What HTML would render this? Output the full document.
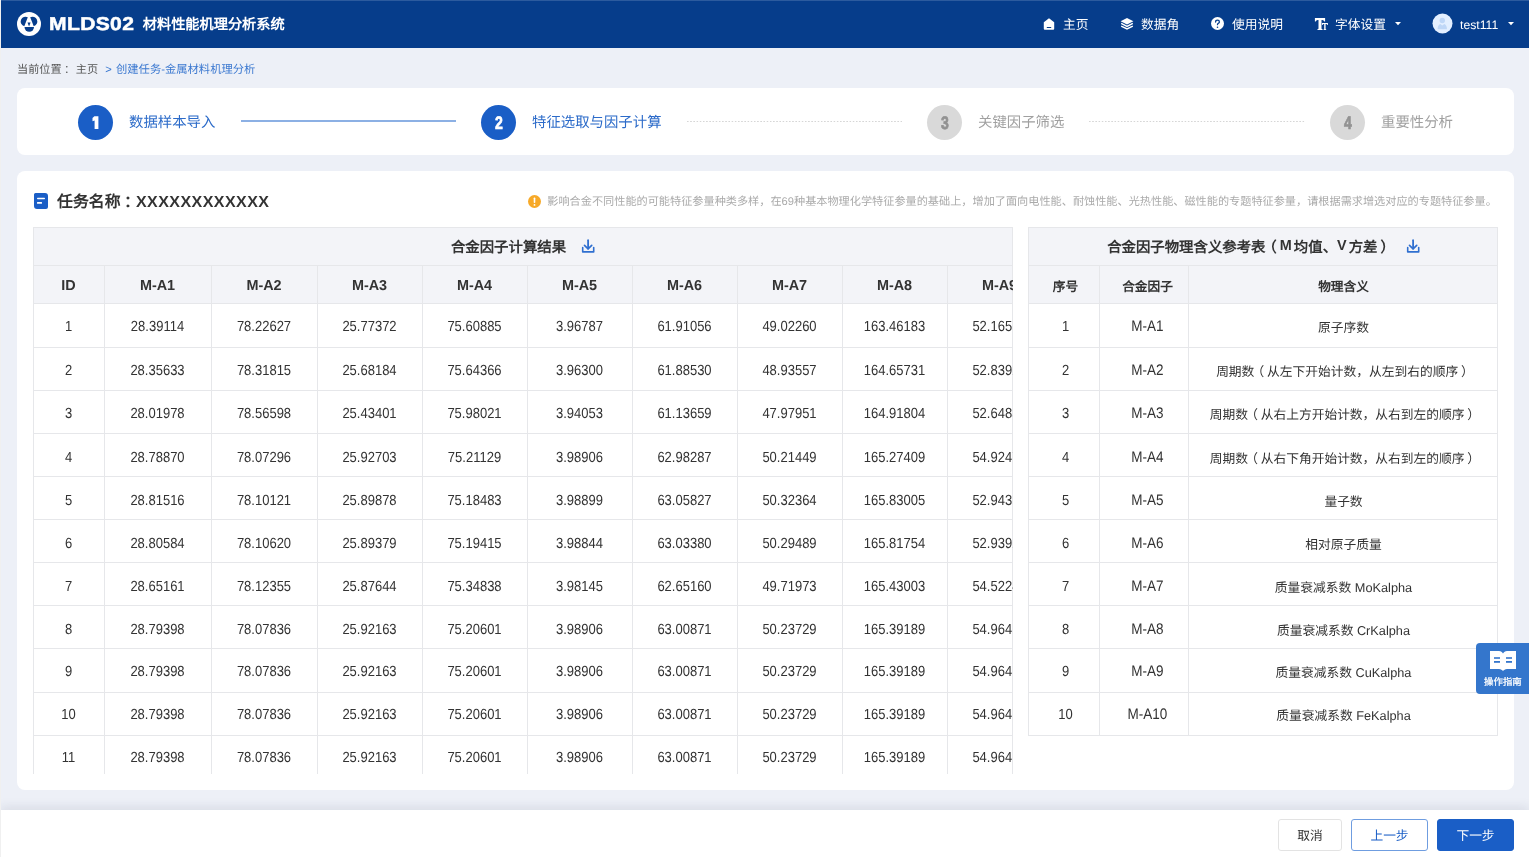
<!DOCTYPE html>
<html lang="zh-CN">
<head>
<meta charset="utf-8">
<title>MLDS02 材料性能机理分析系统</title>
<style>
*{box-sizing:border-box;margin:0;padding:0}
html,body{width:1529px;height:857px;overflow:hidden}
body{position:relative;background:#edf0f7;font-family:"Liberation Sans",sans-serif;color:#333;text-rendering:geometricPrecision}
.abs{position:absolute}
.root{position:absolute;left:0;top:0;width:1529px;height:857px;overflow:hidden;will-change:transform}
.edge{position:absolute;left:0;top:0;width:1px;height:857px;background:#f0f0f0;z-index:50}
.hdr{position:absolute;left:0;top:0;width:1529px;height:48px;background:#063d8b;box-shadow:inset 0 1px 0 #2c5b9e}
.hdr .t{position:absolute;color:#fff;white-space:nowrap}
.nav{position:absolute;top:0;height:48px;line-height:48px;font-size:12.74px;color:#fff;white-space:nowrap}
.crumb{position:absolute;left:17px;top:62px;font-size:11.15px;line-height:16px;color:#555;white-space:nowrap}
.crumb a{color:#3b78d0;text-decoration:none}
.card{position:absolute;background:#fff;border-radius:8px}
.circ{position:absolute;width:35px;height:35px;border-radius:50%;top:104.8px;text-align:center;line-height:36px;font-weight:bold;font-size:18px}
.circ span{display:inline-block;transform:scaleX(0.78);-webkit-text-stroke:0.7px currentColor;position:relative;left:0.8px}
.circ.on{background:#1a5ec6;color:#fff}
.circ.off{background:#d9d9d9;color:#929292}
.slab{position:absolute;top:111px;line-height:24px;font-size:14.4px;white-space:nowrap}
.slab.on{color:#2c6bc9}
.slab.off{color:#a0a0a0}
.sline{position:absolute;top:120px;height:2px}
.tbl{position:absolute;overflow:hidden}
.tbl .hb{position:absolute;background:#f3f4f8}
.tbl .hl{position:absolute;left:0;right:0;height:1px;background:#e6e7ea}
.tbl .vl{position:absolute;width:1px;background:#e6e7ea}
.tbl .ttl{position:absolute;display:flex;align-items:center;justify-content:center;font-weight:bold;font-size:14.4px;color:#333;white-space:nowrap}
.tbl .th{position:absolute;display:flex;align-items:center;justify-content:center;padding-top:3.5px;font-weight:bold;font-size:14.4px;color:#333;white-space:nowrap}
.tbl .td{position:absolute;display:flex;align-items:center;justify-content:center;padding-top:2.2px;font-size:13px;color:#333;white-space:nowrap}
.lp{position:relative;left:-0.22em}.rp{position:relative;left:0.22em}
.th.cj{font-size:12.7px}
.td.cj{font-size:12.74px}
.td.ma{font-size:13.5px}
.tbl .n{display:inline-block;transform:scaleY(1.13) translateY(-0.55px)}
.dl{display:inline-block;width:13px;height:13px;position:relative}
.btn{position:absolute;top:819px;height:32px;border-radius:3px;font-size:12.74px;line-height:32px;text-align:center;white-space:nowrap}
</style>
</head>
<body>
<div class="root">
<div class="edge"></div>

<!-- header -->
<div class="hdr">
  <svg class="abs" style="left:17px;top:11px" width="24" height="26" viewBox="0 0 24 26">
    <circle cx="12" cy="12.9" r="12" fill="#fff"/>
    <path d="M10.8 6.2 L7.3 15.3 A4.9 4.9 0 1 1 10.8 6.2 Z" fill="#063d8b"/>
    <path d="M13.2 6.2 L16.7 15.3 A4.9 4.9 0 1 0 13.2 6.2 Z" fill="#063d8b"/>
    <path d="M7.5 16.1 H17 A4.75 4.75 0 0 1 7.5 16.1 Z" fill="#063d8b"/>
    <path d="M10.5 11.5 H13.6 L12.05 15.5 Z" fill="#063d8b"/>
  </svg>
  <div class="t" style="left:49.4px;top:9.6px;font-size:18.5px;line-height:28px;font-weight:bold;letter-spacing:0.3px;-webkit-text-stroke:0.5px #fff;transform:scaleX(1.14);transform-origin:0 0">MLDS02</div>
  <div class="t" style="left:142.8px;top:10.6px;font-size:14.2px;line-height:28px;font-weight:bold">材料性能机理分析系统</div>

  <!-- nav -->
  <svg class="abs" style="left:1043px;top:18px" width="12" height="12" viewBox="0 0 12 12">
    <path d="M6 0.3 L11.2 4.3 V10.8 a1 1 0 0 1 -1 1 H1.8 a1 1 0 0 1 -1 -1 V4.3 Z" fill="#fff"/>
    <rect x="3.7" y="8.9" width="4.6" height="1.1" rx="0.5" fill="#063d8b"/>
  </svg>
  <div class="nav" style="left:1063px;top:1.2px">主页</div>
  <svg class="abs" style="left:1120px;top:18px" width="14" height="12" viewBox="0 0 14 12">
    <path d="M7 0 L13.4 3.2 L7 6.4 L0.6 3.2 Z" fill="#fff"/>
    <path d="M1.2 5.4 L7 8.3 L12.8 5.4" fill="none" stroke="#fff" stroke-width="1.5"/>
    <path d="M1.2 8.1 L7 11 L12.8 8.1" fill="none" stroke="#fff" stroke-width="1.5"/>
  </svg>
  <div class="nav" style="left:1141px;top:1.2px">数据角</div>
  <svg class="abs" style="left:1211px;top:17.3px" width="13" height="13" viewBox="0 0 13 13">
    <circle cx="6.5" cy="6.5" r="6.5" fill="#fff"/>
    <path d="M4.6 5.0 C4.6 3.9 5.4 3.2 6.5 3.2 C7.6 3.2 8.4 3.9 8.4 4.9 C8.4 6.0 7.0 6.2 6.6 7.1 L6.5 7.6" fill="none" stroke="#063d8b" stroke-width="1.25" stroke-linecap="round"/>
    <circle cx="6.5" cy="10.2" r="0.8" fill="#063d8b"/>
  </svg>
  <div class="nav" style="left:1232px;top:1.2px">使用说明</div>
  <svg class="abs" style="left:1310px;top:12px" width="24" height="24" viewBox="0 0 24 24">
    <path d="M4.9 6 H15.1 V9.4 H14.3 Q14 7.9 12.4 7.9 H11.5 V16.4 Q11.5 17 12.5 17.1 V17.9 H7.5 V17.1 Q8.5 17 8.5 16.4 V7.9 H7.6 Q6 7.9 5.7 9.4 H4.9 Z" fill="#fff"/>
    <path d="M12 10.9 H17.9 V12.9 H17.3 Q17.1 12.1 16.2 12.1 H15.6 V17 Q15.6 17.3 16.2 17.3 V17.9 H13.6 V17.3 Q14.2 17.3 14.2 17 V12.1 H13.7 Q12.8 12.1 12.6 12.9 H12 Z" fill="#fff"/>
  </svg>
  <div class="nav" style="left:1335px;top:1.2px">字体设置</div>
  <svg class="abs" style="left:1395px;top:22px" width="6" height="4" viewBox="0 0 6 4"><path d="M0 0 H6 L3 3.2 Z" fill="#fff"/></svg>
  <svg class="abs" style="left:1432px;top:13px" width="21" height="21" viewBox="0 0 21 21">
    <circle cx="10.5" cy="10.5" r="10" fill="#e3efff"/>
    <circle cx="10.3" cy="7.5" r="2.7" fill="#bfd7f7"/>
    <path d="M5.6 16.2 C5.6 12.8 7.2 11.2 8.3 11 L10.3 12.6 L12.3 11 C13.4 11.2 15 12.8 15 16.2 Z" fill="#bfd7f7"/>
  </svg>
  <div class="nav" style="left:1460px;top:0.5px;font-size:12.2px">test111</div>
  <svg class="abs" style="left:1508px;top:22px" width="6" height="4" viewBox="0 0 6 4"><path d="M0 0 H6 L3 3.2 Z" fill="#fff"/></svg>
</div>

<!-- breadcrumb -->
<div class="crumb" style="left:17px">当前位置<span style="position:relative;left:2.5px">：</span></div><div class="crumb" style="left:75.8px">主页</div><div class="crumb" style="left:105.3px;color:#3b78d0">&gt;</div><div class="crumb" style="left:116px;color:#3b78d0;font-size:11.3px">创建任务-金属材料机理分析</div>

<!-- steps card -->
<div class="card" style="left:17px;top:88px;width:1497px;height:67px"></div>
<div class="circ on" style="left:78.3px"><svg style="position:absolute;left:0;top:0" width="35" height="35" viewBox="0 0 35 35"><path d="M16.4 11.2 H20.4 V24.1 H16.6 V15.4 L14.5 16.3 V13.0 Z" fill="#fff"/></svg></div>
<div class="slab on" style="left:129px">数据样本导入</div>
<div class="sline" style="left:241px;width:215px;background:#8cb0e4;height:1.6px"></div>
<div class="circ on" style="left:481px"><span>2</span></div>
<div class="slab on" style="left:532px">特征选取与因子计算</div>
<div class="sline" style="left:687px;top:121px;width:215px;height:1px;background-image:linear-gradient(to right,#d6d6d6 1.2px,transparent 1.2px);background-size:3.19px 1px"></div>
<div class="circ off" style="left:927px"><span>3</span></div>
<div class="slab off" style="left:978px">关键因子筛选</div>
<div class="sline" style="left:1089px;top:121px;width:216px;height:1px;background-image:linear-gradient(to right,#d6d6d6 1.2px,transparent 1.2px);background-size:3.19px 1px"></div>
<div class="circ off" style="left:1330px"><span>4</span></div>
<div class="slab off" style="left:1381px">重要性分析</div>

<!-- main card -->
<div class="card" style="left:17px;top:171px;width:1497px;height:619px"></div>
<svg class="abs" style="left:34px;top:193px" width="14" height="16" viewBox="0 0 14 16">
  <path d="M1.5 0 H11 A3 3 0 0 1 14 3 V14 A2 2 0 0 1 12 16 H3 A3 3 0 0 1 0 13 V1.5 A1.5 1.5 0 0 1 1.5 0 Z" fill="#1a5ec6"/>
  <rect x="3" y="4.8" width="8" height="1.5" rx="0.7" fill="#fff"/>
  <rect x="3" y="9.1" width="5" height="1.7" rx="0.5" fill="#fff"/>
</svg>
<div class="abs" style="left:57px;top:191.5px;font-size:15.9px;line-height:22px;font-weight:bold;color:#333;white-space:nowrap">任务名称</div>
<div class="abs" style="left:124px;top:191.5px;font-size:15.9px;line-height:22px;font-weight:bold;color:#333;white-space:nowrap">：</div>
<div class="abs" style="left:136px;top:191.5px;font-size:16px;line-height:22px;font-weight:bold;color:#333;white-space:nowrap;letter-spacing:0.45px">XXXXXXXXXXXX</div>
<svg class="abs" style="left:528px;top:195px" width="13" height="13" viewBox="0 0 13 13">
  <circle cx="6.5" cy="6.5" r="6.5" fill="#f7a928"/>
  <rect x="5.7" y="2.6" width="1.6" height="5.4" rx="0.7" fill="#fff"/>
  <circle cx="6.5" cy="9.9" r="0.9" fill="#fff"/>
</svg>
<div class="abs" style="left:547.3px;top:194px;font-size:11.16px;line-height:16px;color:#aaa;white-space:nowrap">影响合金不同性能的可能特征参量种类多样，在69种基本物理化学特征参量的基础上，增加了面向电性能、耐蚀性能、光热性能、磁性能的专题特征参量，请根据需求增选对应的专题特征参量。</div>

<div class="tbl" style="left:33px;top:227px;width:980px;height:547px">
<div class="hb" style="left:0;top:0;width:100%;height:76px"></div>
<div class="hl" style="top:0px"></div>
<div class="hl" style="top:38px"></div>
<div class="hl" style="top:76px"></div>
<div class="hl" style="top:120px"></div>
<div class="hl" style="top:163px"></div>
<div class="hl" style="top:206px"></div>
<div class="hl" style="top:249px"></div>
<div class="hl" style="top:292px"></div>
<div class="hl" style="top:335px"></div>
<div class="hl" style="top:378px"></div>
<div class="hl" style="top:421px"></div>
<div class="hl" style="top:465px"></div>
<div class="hl" style="top:508px"></div>
<div class="vl" style="left:0;top:0;bottom:0"></div>
<div class="vl" style="left:979px;top:0;bottom:0"></div>
<div class="vl" style="left:71px;top:38px;bottom:0"></div>
<div class="vl" style="left:178px;top:38px;bottom:0"></div>
<div class="vl" style="left:284px;top:38px;bottom:0"></div>
<div class="vl" style="left:389px;top:38px;bottom:0"></div>
<div class="vl" style="left:494px;top:38px;bottom:0"></div>
<div class="vl" style="left:599px;top:38px;bottom:0"></div>
<div class="vl" style="left:704px;top:38px;bottom:0"></div>
<div class="vl" style="left:809px;top:38px;bottom:0"></div>
<div class="vl" style="left:914px;top:38px;bottom:0"></div>
<div class="ttl" style="left:1px;top:0.3px;width:979px;height:38px;padding-right:30px">合金因子计算结果</div>
<svg style="position:absolute;left:548px;top:12px" width="14" height="14" viewBox="0 0 14 14"><path d="M7.1 1.2 V9.6" stroke="#2f6fd0" stroke-width="1.8" stroke-linecap="round" fill="none"/><path d="M3.5 6.4 L7.1 9.9 L10.7 6.4" stroke="#2f6fd0" stroke-width="1.7" stroke-linecap="round" stroke-linejoin="round" fill="none"/><path d="M1.7 8.6 V12.9 H12.7 V8.6" stroke="#2f6fd0" stroke-width="1.6" stroke-linecap="round" stroke-linejoin="round" fill="none"/></svg>
<div class="th" style="left:0px;top:38px;width:71px;height:38px">ID</div>
<div class="th" style="left:71px;top:38px;width:107px;height:38px">M-A1</div>
<div class="th" style="left:178px;top:38px;width:106px;height:38px">M-A2</div>
<div class="th" style="left:284px;top:38px;width:105px;height:38px">M-A3</div>
<div class="th" style="left:389px;top:38px;width:105px;height:38px">M-A4</div>
<div class="th" style="left:494px;top:38px;width:105px;height:38px">M-A5</div>
<div class="th" style="left:599px;top:38px;width:105px;height:38px">M-A6</div>
<div class="th" style="left:704px;top:38px;width:105px;height:38px">M-A7</div>
<div class="th" style="left:809px;top:38px;width:105px;height:38px">M-A8</div>
<div class="th" style="left:914px;top:38px;width:105px;height:38px">M-A9</div>
<div class="td" style="left:0px;top:76.00px;width:71px;height:44px"><span class="n">1</span></div>
<div class="td" style="left:71px;top:76.00px;width:107px;height:44px"><span class="n">28.39114</span></div>
<div class="td" style="left:178px;top:76.00px;width:106px;height:44px"><span class="n">78.22627</span></div>
<div class="td" style="left:284px;top:76.00px;width:105px;height:44px"><span class="n">25.77372</span></div>
<div class="td" style="left:389px;top:76.00px;width:105px;height:44px"><span class="n">75.60885</span></div>
<div class="td" style="left:494px;top:76.00px;width:105px;height:44px"><span class="n">3.96787</span></div>
<div class="td" style="left:599px;top:76.00px;width:105px;height:44px"><span class="n">61.91056</span></div>
<div class="td" style="left:704px;top:76.00px;width:105px;height:44px"><span class="n">49.02260</span></div>
<div class="td" style="left:809px;top:76.00px;width:105px;height:44px"><span class="n">163.46183</span></div>
<div class="td" style="left:914px;top:76.00px;width:105px;height:44px"><span class="n">52.16512</span></div>
<div class="td" style="left:0px;top:120.90px;width:71px;height:43px"><span class="n">2</span></div>
<div class="td" style="left:71px;top:120.90px;width:107px;height:43px"><span class="n">28.35633</span></div>
<div class="td" style="left:178px;top:120.90px;width:106px;height:43px"><span class="n">78.31815</span></div>
<div class="td" style="left:284px;top:120.90px;width:105px;height:43px"><span class="n">25.68184</span></div>
<div class="td" style="left:389px;top:120.90px;width:105px;height:43px"><span class="n">75.64366</span></div>
<div class="td" style="left:494px;top:120.90px;width:105px;height:43px"><span class="n">3.96300</span></div>
<div class="td" style="left:599px;top:120.90px;width:105px;height:43px"><span class="n">61.88530</span></div>
<div class="td" style="left:704px;top:120.90px;width:105px;height:43px"><span class="n">48.93557</span></div>
<div class="td" style="left:809px;top:120.90px;width:105px;height:43px"><span class="n">164.65731</span></div>
<div class="td" style="left:914px;top:120.90px;width:105px;height:43px"><span class="n">52.83921</span></div>
<div class="td" style="left:0px;top:163.90px;width:71px;height:43px"><span class="n">3</span></div>
<div class="td" style="left:71px;top:163.90px;width:107px;height:43px"><span class="n">28.01978</span></div>
<div class="td" style="left:178px;top:163.90px;width:106px;height:43px"><span class="n">78.56598</span></div>
<div class="td" style="left:284px;top:163.90px;width:105px;height:43px"><span class="n">25.43401</span></div>
<div class="td" style="left:389px;top:163.90px;width:105px;height:43px"><span class="n">75.98021</span></div>
<div class="td" style="left:494px;top:163.90px;width:105px;height:43px"><span class="n">3.94053</span></div>
<div class="td" style="left:599px;top:163.90px;width:105px;height:43px"><span class="n">61.13659</span></div>
<div class="td" style="left:704px;top:163.90px;width:105px;height:43px"><span class="n">47.97951</span></div>
<div class="td" style="left:809px;top:163.90px;width:105px;height:43px"><span class="n">164.91804</span></div>
<div class="td" style="left:914px;top:163.90px;width:105px;height:43px"><span class="n">52.64832</span></div>
<div class="td" style="left:0px;top:208.00px;width:71px;height:43px"><span class="n">4</span></div>
<div class="td" style="left:71px;top:208.00px;width:107px;height:43px"><span class="n">28.78870</span></div>
<div class="td" style="left:178px;top:208.00px;width:106px;height:43px"><span class="n">78.07296</span></div>
<div class="td" style="left:284px;top:208.00px;width:105px;height:43px"><span class="n">25.92703</span></div>
<div class="td" style="left:389px;top:208.00px;width:105px;height:43px"><span class="n">75.21129</span></div>
<div class="td" style="left:494px;top:208.00px;width:105px;height:43px"><span class="n">3.98906</span></div>
<div class="td" style="left:599px;top:208.00px;width:105px;height:43px"><span class="n">62.98287</span></div>
<div class="td" style="left:704px;top:208.00px;width:105px;height:43px"><span class="n">50.21449</span></div>
<div class="td" style="left:809px;top:208.00px;width:105px;height:43px"><span class="n">165.27409</span></div>
<div class="td" style="left:914px;top:208.00px;width:105px;height:43px"><span class="n">54.92471</span></div>
<div class="td" style="left:0px;top:251.00px;width:71px;height:43px"><span class="n">5</span></div>
<div class="td" style="left:71px;top:251.00px;width:107px;height:43px"><span class="n">28.81516</span></div>
<div class="td" style="left:178px;top:251.00px;width:106px;height:43px"><span class="n">78.10121</span></div>
<div class="td" style="left:284px;top:251.00px;width:105px;height:43px"><span class="n">25.89878</span></div>
<div class="td" style="left:389px;top:251.00px;width:105px;height:43px"><span class="n">75.18483</span></div>
<div class="td" style="left:494px;top:251.00px;width:105px;height:43px"><span class="n">3.98899</span></div>
<div class="td" style="left:599px;top:251.00px;width:105px;height:43px"><span class="n">63.05827</span></div>
<div class="td" style="left:704px;top:251.00px;width:105px;height:43px"><span class="n">50.32364</span></div>
<div class="td" style="left:809px;top:251.00px;width:105px;height:43px"><span class="n">165.83005</span></div>
<div class="td" style="left:914px;top:251.00px;width:105px;height:43px"><span class="n">52.94318</span></div>
<div class="td" style="left:0px;top:293.85px;width:71px;height:43px"><span class="n">6</span></div>
<div class="td" style="left:71px;top:293.85px;width:107px;height:43px"><span class="n">28.80584</span></div>
<div class="td" style="left:178px;top:293.85px;width:106px;height:43px"><span class="n">78.10620</span></div>
<div class="td" style="left:284px;top:293.85px;width:105px;height:43px"><span class="n">25.89379</span></div>
<div class="td" style="left:389px;top:293.85px;width:105px;height:43px"><span class="n">75.19415</span></div>
<div class="td" style="left:494px;top:293.85px;width:105px;height:43px"><span class="n">3.98844</span></div>
<div class="td" style="left:599px;top:293.85px;width:105px;height:43px"><span class="n">63.03380</span></div>
<div class="td" style="left:704px;top:293.85px;width:105px;height:43px"><span class="n">50.29489</span></div>
<div class="td" style="left:809px;top:293.85px;width:105px;height:43px"><span class="n">165.81754</span></div>
<div class="td" style="left:914px;top:293.85px;width:105px;height:43px"><span class="n">52.93927</span></div>
<div class="td" style="left:0px;top:336.90px;width:71px;height:43px"><span class="n">7</span></div>
<div class="td" style="left:71px;top:336.90px;width:107px;height:43px"><span class="n">28.65161</span></div>
<div class="td" style="left:178px;top:336.90px;width:106px;height:43px"><span class="n">78.12355</span></div>
<div class="td" style="left:284px;top:336.90px;width:105px;height:43px"><span class="n">25.87644</span></div>
<div class="td" style="left:389px;top:336.90px;width:105px;height:43px"><span class="n">75.34838</span></div>
<div class="td" style="left:494px;top:336.90px;width:105px;height:43px"><span class="n">3.98145</span></div>
<div class="td" style="left:599px;top:336.90px;width:105px;height:43px"><span class="n">62.65160</span></div>
<div class="td" style="left:704px;top:336.90px;width:105px;height:43px"><span class="n">49.71973</span></div>
<div class="td" style="left:809px;top:336.90px;width:105px;height:43px"><span class="n">165.43003</span></div>
<div class="td" style="left:914px;top:336.90px;width:105px;height:43px"><span class="n">54.52241</span></div>
<div class="td" style="left:0px;top:379.85px;width:71px;height:43px"><span class="n">8</span></div>
<div class="td" style="left:71px;top:379.85px;width:107px;height:43px"><span class="n">28.79398</span></div>
<div class="td" style="left:178px;top:379.85px;width:106px;height:43px"><span class="n">78.07836</span></div>
<div class="td" style="left:284px;top:379.85px;width:105px;height:43px"><span class="n">25.92163</span></div>
<div class="td" style="left:389px;top:379.85px;width:105px;height:43px"><span class="n">75.20601</span></div>
<div class="td" style="left:494px;top:379.85px;width:105px;height:43px"><span class="n">3.98906</span></div>
<div class="td" style="left:599px;top:379.85px;width:105px;height:43px"><span class="n">63.00871</span></div>
<div class="td" style="left:704px;top:379.85px;width:105px;height:43px"><span class="n">50.23729</span></div>
<div class="td" style="left:809px;top:379.85px;width:105px;height:43px"><span class="n">165.39189</span></div>
<div class="td" style="left:914px;top:379.85px;width:105px;height:43px"><span class="n">54.96410</span></div>
<div class="td" style="left:0px;top:421.20px;width:71px;height:44px"><span class="n">9</span></div>
<div class="td" style="left:71px;top:421.20px;width:107px;height:44px"><span class="n">28.79398</span></div>
<div class="td" style="left:178px;top:421.20px;width:106px;height:44px"><span class="n">78.07836</span></div>
<div class="td" style="left:284px;top:421.20px;width:105px;height:44px"><span class="n">25.92163</span></div>
<div class="td" style="left:389px;top:421.20px;width:105px;height:44px"><span class="n">75.20601</span></div>
<div class="td" style="left:494px;top:421.20px;width:105px;height:44px"><span class="n">3.98906</span></div>
<div class="td" style="left:599px;top:421.20px;width:105px;height:44px"><span class="n">63.00871</span></div>
<div class="td" style="left:704px;top:421.20px;width:105px;height:44px"><span class="n">50.23729</span></div>
<div class="td" style="left:809px;top:421.20px;width:105px;height:44px"><span class="n">165.39189</span></div>
<div class="td" style="left:914px;top:421.20px;width:105px;height:44px"><span class="n">54.96410</span></div>
<div class="td" style="left:0px;top:465.00px;width:71px;height:43px"><span class="n">10</span></div>
<div class="td" style="left:71px;top:465.00px;width:107px;height:43px"><span class="n">28.79398</span></div>
<div class="td" style="left:178px;top:465.00px;width:106px;height:43px"><span class="n">78.07836</span></div>
<div class="td" style="left:284px;top:465.00px;width:105px;height:43px"><span class="n">25.92163</span></div>
<div class="td" style="left:389px;top:465.00px;width:105px;height:43px"><span class="n">75.20601</span></div>
<div class="td" style="left:494px;top:465.00px;width:105px;height:43px"><span class="n">3.98906</span></div>
<div class="td" style="left:599px;top:465.00px;width:105px;height:43px"><span class="n">63.00871</span></div>
<div class="td" style="left:704px;top:465.00px;width:105px;height:43px"><span class="n">50.23729</span></div>
<div class="td" style="left:809px;top:465.00px;width:105px;height:43px"><span class="n">165.39189</span></div>
<div class="td" style="left:914px;top:465.00px;width:105px;height:43px"><span class="n">54.96410</span></div>
<div class="td" style="left:0px;top:508.00px;width:71px;height:43px"><span class="n">11</span></div>
<div class="td" style="left:71px;top:508.00px;width:107px;height:43px"><span class="n">28.79398</span></div>
<div class="td" style="left:178px;top:508.00px;width:106px;height:43px"><span class="n">78.07836</span></div>
<div class="td" style="left:284px;top:508.00px;width:105px;height:43px"><span class="n">25.92163</span></div>
<div class="td" style="left:389px;top:508.00px;width:105px;height:43px"><span class="n">75.20601</span></div>
<div class="td" style="left:494px;top:508.00px;width:105px;height:43px"><span class="n">3.98906</span></div>
<div class="td" style="left:599px;top:508.00px;width:105px;height:43px"><span class="n">63.00871</span></div>
<div class="td" style="left:704px;top:508.00px;width:105px;height:43px"><span class="n">50.23729</span></div>
<div class="td" style="left:809px;top:508.00px;width:105px;height:43px"><span class="n">165.39189</span></div>
<div class="td" style="left:914px;top:508.00px;width:105px;height:43px"><span class="n">54.96410</span></div>
</div>
<div class="tbl" style="left:1028px;top:227px;width:470px;height:509px">
<div class="hb" style="left:0;top:0;width:100%;height:76px"></div>
<div class="hl" style="top:0px"></div>
<div class="hl" style="top:38px"></div>
<div class="hl" style="top:76px"></div>
<div class="hl" style="top:120px"></div>
<div class="hl" style="top:163px"></div>
<div class="hl" style="top:206px"></div>
<div class="hl" style="top:249px"></div>
<div class="hl" style="top:292px"></div>
<div class="hl" style="top:335px"></div>
<div class="hl" style="top:378px"></div>
<div class="hl" style="top:421px"></div>
<div class="hl" style="top:465px"></div>
<div class="hl" style="top:508px"></div>
<div class="vl" style="left:0;top:0;bottom:0"></div>
<div class="vl" style="left:469px;top:0;bottom:0"></div>
<div class="vl" style="left:71px;top:38px;bottom:0"></div>
<div class="vl" style="left:160px;top:38px;bottom:0"></div>
<div class="ttl" style="left:2px;top:0.3px;width:469px;height:38px;padding-right:30px">合金因子物理含义参考表<span class="lp">（</span><span style="margin-right:2px">M</span>均值、<span style="margin-right:2px">V</span>方差<span class="rp">）</span></div>
<svg style="position:absolute;left:378px;top:12px" width="14" height="14" viewBox="0 0 14 14"><path d="M7.1 1.2 V9.6" stroke="#2f6fd0" stroke-width="1.8" stroke-linecap="round" fill="none"/><path d="M3.5 6.4 L7.1 9.9 L10.7 6.4" stroke="#2f6fd0" stroke-width="1.7" stroke-linecap="round" stroke-linejoin="round" fill="none"/><path d="M1.7 8.6 V12.9 H12.7 V8.6" stroke="#2f6fd0" stroke-width="1.6" stroke-linecap="round" stroke-linejoin="round" fill="none"/></svg>
<div class="th cj" style="left:2px;top:38px;width:71px;height:38px">序号</div>
<div class="th cj" style="left:75px;top:38px;width:89px;height:38px">合金因子</div>
<div class="th cj" style="left:161px;top:38px;width:309px;height:38px">物理含义</div>
<div class="td" style="left:2px;top:76.00px;width:71px;height:44px"><span class="n">1</span></div>
<div class="td ma" style="left:75px;top:76.00px;width:89px;height:44px"><span class="n">M-A1</span></div>
<div class="td cj" style="left:161px;top:76.00px;width:309px;height:44px">原子序数</div>
<div class="td" style="left:2px;top:120.90px;width:71px;height:43px"><span class="n">2</span></div>
<div class="td ma" style="left:75px;top:120.90px;width:89px;height:43px"><span class="n">M-A2</span></div>
<div class="td cj" style="left:161px;top:120.90px;width:309px;height:43px">周期数<span class="lp">（</span>从左下开始计数，从左到右的顺序<span class="rp">）</span></div>
<div class="td" style="left:2px;top:163.90px;width:71px;height:43px"><span class="n">3</span></div>
<div class="td ma" style="left:75px;top:163.90px;width:89px;height:43px"><span class="n">M-A3</span></div>
<div class="td cj" style="left:161px;top:163.90px;width:309px;height:43px">周期数<span class="lp">（</span>从右上方开始计数，从右到左的顺序<span class="rp">）</span></div>
<div class="td" style="left:2px;top:208.00px;width:71px;height:43px"><span class="n">4</span></div>
<div class="td ma" style="left:75px;top:208.00px;width:89px;height:43px"><span class="n">M-A4</span></div>
<div class="td cj" style="left:161px;top:208.00px;width:309px;height:43px">周期数<span class="lp">（</span>从右下角开始计数，从右到左的顺序<span class="rp">）</span></div>
<div class="td" style="left:2px;top:251.00px;width:71px;height:43px"><span class="n">5</span></div>
<div class="td ma" style="left:75px;top:251.00px;width:89px;height:43px"><span class="n">M-A5</span></div>
<div class="td cj" style="left:161px;top:251.00px;width:309px;height:43px">量子数</div>
<div class="td" style="left:2px;top:293.85px;width:71px;height:43px"><span class="n">6</span></div>
<div class="td ma" style="left:75px;top:293.85px;width:89px;height:43px"><span class="n">M-A6</span></div>
<div class="td cj" style="left:161px;top:293.85px;width:309px;height:43px">相对原子质量</div>
<div class="td" style="left:2px;top:336.90px;width:71px;height:43px"><span class="n">7</span></div>
<div class="td ma" style="left:75px;top:336.90px;width:89px;height:43px"><span class="n">M-A7</span></div>
<div class="td cj" style="left:161px;top:336.90px;width:309px;height:43px">质量衰减系数 MoKalpha</div>
<div class="td" style="left:2px;top:379.85px;width:71px;height:43px"><span class="n">8</span></div>
<div class="td ma" style="left:75px;top:379.85px;width:89px;height:43px"><span class="n">M-A8</span></div>
<div class="td cj" style="left:161px;top:379.85px;width:309px;height:43px">质量衰减系数 CrKalpha</div>
<div class="td" style="left:2px;top:421.20px;width:71px;height:44px"><span class="n">9</span></div>
<div class="td ma" style="left:75px;top:421.20px;width:89px;height:44px"><span class="n">M-A9</span></div>
<div class="td cj" style="left:161px;top:421.20px;width:309px;height:44px">质量衰减系数 CuKalpha</div>
<div class="td" style="left:2px;top:465.00px;width:71px;height:43px"><span class="n">10</span></div>
<div class="td ma" style="left:75px;top:465.00px;width:89px;height:43px"><span class="n">M-A10</span></div>
<div class="td cj" style="left:161px;top:465.00px;width:309px;height:43px">质量衰减系数 FeKalpha</div>
</div>

<!-- footer -->
<div class="abs" style="left:0;top:810px;width:1529px;height:47px;background:#fff;box-shadow:0 -3px 10px rgba(40,50,80,0.10)"></div>
<div class="btn" style="left:1278px;width:64px;border:1px solid #e3e3e3;background:#fff;color:#333">取消</div>
<div class="btn" style="left:1351px;width:77px;border:1px solid #6f9de0;background:#fff;color:#1a5ec6">上一步</div>
<div class="btn" style="left:1437px;width:77px;border:1px solid #1a5ec6;background:#1a5ec6;color:#fff">下一步</div>

<!-- side tab -->
<div class="abs" style="left:1476px;top:643px;width:53px;height:51px;background:#3476cc;border-radius:4px 0 0 4px"></div>
<svg class="abs" style="left:1490px;top:651px" width="26" height="20" viewBox="0 0 26 20">
  <path d="M0 0 H9 C11 0 12 1 13 2.4 C14 1 15 0 17 0 H26 V18 H17 C15 18 14 19 13 20 C12 19 11 18 9 18 H0 Z" fill="#fff"/>
  <rect x="4" y="6.2" width="6" height="1.6" fill="#3476cc"/>
  <rect x="4" y="10" width="6" height="1.8" fill="#3476cc"/>
  <rect x="16" y="6.2" width="6" height="1.6" fill="#3476cc"/>
  <rect x="16" y="10" width="6" height="1.8" fill="#3476cc"/>
</svg>
<div class="abs" style="left:1484px;top:676px;font-size:9.45px;line-height:13px;color:#fff;white-space:nowrap;-webkit-text-stroke:0.25px #fff">操作指南</div>
</div>
</body>
</html>
